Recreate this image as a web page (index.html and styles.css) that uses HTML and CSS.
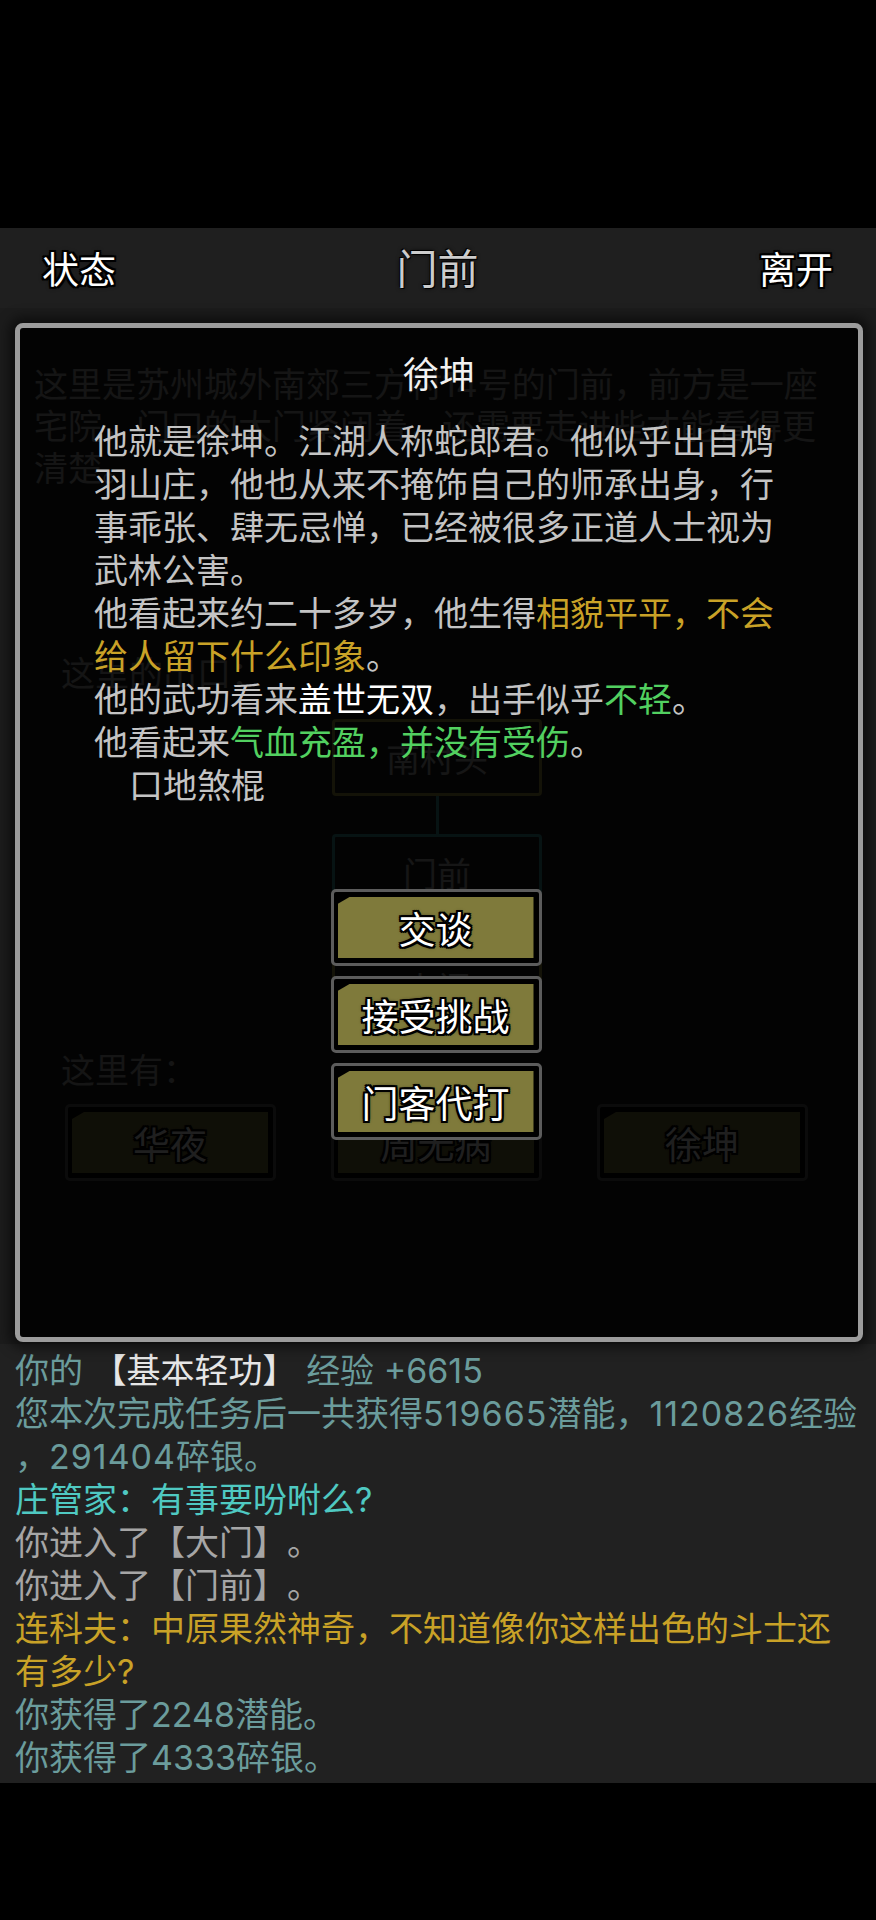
FILE: index.html
```html
<!DOCTYPE html>
<html lang="zh-CN">
<head>
<meta charset="UTF-8" />
<meta name="viewport" content="width=device-width, initial-scale=1" />
<title>门前</title>
<link rel="stylesheet" href="styles.css">
</head>
<body>

<div class="top-gap"></div>

<!-- Top bar -->
<div class="topbar">
  <span class="topbar-btn left">状态</span>
  <span class="topbar-title">门前</span>
  <span class="topbar-btn right">离开</span>
</div>

<!-- Room scene (dimmed behind the popup) -->
<div class="scene">
  <p class="room-desc">这里是苏州城外南郊三方村14号的门前，前方是一座宅院，门口的大门紧闭着，还需要走进些才能看得更清楚。</p>
  <p class="exits">这里的出口：</p>

  <div class="map">
    <div class="map-node far">南村头</div>
    <div class="map-link"></div>
    <div class="map-node here">门前</div>
    <div class="map-link"></div>
    <div class="map-node far">大门</div>
  </div>

  <p class="here-label">这里有：</p>
  <div class="npc-row">
    <div class="btn"><div class="btn-face">华夜</div></div>
    <div class="btn"><div class="btn-face">周无病</div></div>
    <div class="btn"><div class="btn-face">徐坤</div></div>
  </div>

  <!-- NPC popup -->
  <div class="modal">
    <h2 class="modal-title">徐坤</h2>
    <div class="profile">
      <p>他就是徐坤。江湖人称蛇郎君。他似乎出自鸩羽山庄，他也从来不掩饰自己的师承出身，行事乖张、肆无忌惮，已经被很多正道人士视为武林公害。</p>
      <p>他看起来约二十多岁，他生得<span class="c-yellow">相貌平平，不会给人留下什么印象</span>。</p>
      <p>他的武功看来<span class="c-white">盖世无双</span>，出手似乎<span class="c-green">不轻</span>。</p>
      <p>他看起来<span class="c-green">气血充盈，并没有受伤</span>。</p>
      <p class="skill">口地煞棍</p>
    </div>
    <div class="actions">
      <div class="btn"><div class="btn-face">交谈</div></div>
      <div class="btn"><div class="btn-face">接受挑战</div></div>
      <div class="btn"><div class="btn-face">门客代打</div></div>
    </div>
  </div>
</div>

<!-- Message log -->
<div class="log">
  <div class="c-exp">你的 <span class="c-bright">【基本轻功】</span> 经验 +6615</div>
  <div class="c-exp">您本次完成任务后一共获得<span class="num">519665</span>潜能，<span class="num">1120826</span>经验</div>
  <div class="c-exp">，<span class="num">291404</span>碎银。</div>
  <div class="c-npc">庄管家：有事要吩咐么?</div>
  <div class="c-sys">你进入了【大门】。</div>
  <div class="c-sys">你进入了【门前】。</div>
  <div class="c-gold">连科夫：中原果然神奇，不知道像你这样出色的斗士还</div>
  <div class="c-gold">有多少?</div>
  <div class="c-exp">你获得了2248潜能。</div>
  <div class="c-exp">你获得了4333碎银。</div>
</div>

</body>
</html>
```

FILE: styles.css
```css
body {
  margin: 0;
  width: 876px;
  background: #000;
  font-family: Inter, "Noto Sans CJK SC", sans-serif;
  text-spacing-trim: space-all;
}

p { margin: 0; }

.top-gap { height: 228px; }

/* Top bar */
.topbar {
  height: 80px;
  background: #1f1f1f;
  display: grid;
  grid-template-columns: 1fr auto 1fr;
  align-items: center;
  padding: 0 43px 0 42px;
}

.topbar-btn {
  font-size: 37px;
  color: #fff;
  text-shadow: -2px -2px 0 #000, 2px -2px 0 #000, -2px 2px 0 #000, 2px 2px 0 #000,
    0 -2px 0 #000, 0 2px 0 #000, -2px 0 0 #000, 2px 0 0 #000, 0 0 5px #000;
}
.topbar-btn.left { justify-self: start; }
.topbar-btn.right { justify-self: end; }

.topbar-title {
  font-size: 41px;
  color: #cccccc;
  text-shadow: -1px -1px 0 #000, 1px 1px 0 #000, 0 0 4px #000;
  margin-top: -4px;
}

/* Scene behind popup */
.scene {
  position: relative;
  height: 1036px;
  background: #1c1c1c;
  font-size: 34px;
}

.room-desc {
  width: 800px;
  padding: 56px 0 0 34px;
  line-height: 42px;
  color: #a8a8a8;
}

.exits {
  margin-top: 163px;
  padding-left: 61px;
  line-height: 42px;
  color: #a8a8a8;
}

.map {
  margin-top: 24px;
  display: flex;
  flex-direction: column;
  align-items: center;
  padding-right: 2px;
}

.map-node {
  width: 210px;
  height: 77px;
  box-sizing: border-box;
  border: 3px solid #a09a40;
  border-radius: 4px;
  display: flex;
  justify-content: center;
  align-items: center;
  color: #b0b0b0;
}
.map-node.here { border-color: #3c9c9c; }

.map-link {
  width: 3px;
  height: 38px;
  background: #3c9c9c;
}

.here-label {
  margin-top: 24px;
  padding-left: 61px;
  line-height: 42px;
  color: #a8a8a8;
}

.npc-row {
  margin-top: 12px;
  display: flex;
  gap: 55px;
  padding-left: 65px;
}

/* Olive buttons */
.btn {
  width: 211px;
  height: 77px;
  box-sizing: border-box;
  border: 3px solid #5c5c5c;
  border-radius: 5px;
  background: #000;
  padding: 5px 5px 5px 4px;
}

.btn-face {
  height: 100%;
  background: #7f7a3b;
  clip-path: polygon(12px 0, 100% 0, 100% 100%, 0 100%, 0 7px);
  display: flex;
  justify-content: center;
  align-items: center;
  font-size: 37px;
  color: #fff;
  text-shadow: -2px -2px 0 #000, 2px -2px 0 #000, -2px 2px 0 #000, 2px 2px 0 #000,
    0 -2px 0 #000, 0 2px 0 #000, -2px 0 0 #000, 2px 0 0 #000, 0 0 4px #000;
}

/* Popup */
.modal {
  position: absolute;
  top: 15px;
  left: 15px;
  width: 848px;
  height: 1019px;
  box-sizing: border-box;
  border: 5px solid #9c9c9c;
  border-radius: 8px;
  background: rgba(0, 0, 0, 0.88);
  box-shadow: 0 0 12px 6px rgba(0, 0, 0, 0.5);
}

.modal-title {
  margin: 25px 0 0;
  text-align: center;
  font-size: 36px;
  font-weight: 400;
  line-height: 44px;
  color: #f2f2f2;
}

.profile {
  margin: 23px 0 0 74px;
  width: 700px;
  line-height: 43px;
  color: #c4c4c4;
}
.profile .skill { padding-left: 35px; }

.c-yellow { color: #c9a227; }
.c-white { color: #fff; }
.c-green { color: #52d060; }

.actions {
  margin-top: 82px;
  display: flex;
  flex-direction: column;
  align-items: center;
  gap: 10px;
  padding-right: 6px;
}

/* Message log */
.log {
  height: 439px;
  box-sizing: border-box;
  background: #212121;
  padding: 5px 0 0 15px;
  font-size: 34px;
  line-height: 43px;
  white-space: nowrap;
}

.num { letter-spacing: 1px; }

.c-exp { color: #6b9c9c; }
.c-bright { color: #e6e6e6; }
.c-npc { color: #4fc9c2; }
.c-sys { color: #a6a6a6; }
.c-gold { color: #c9a227; }
```
